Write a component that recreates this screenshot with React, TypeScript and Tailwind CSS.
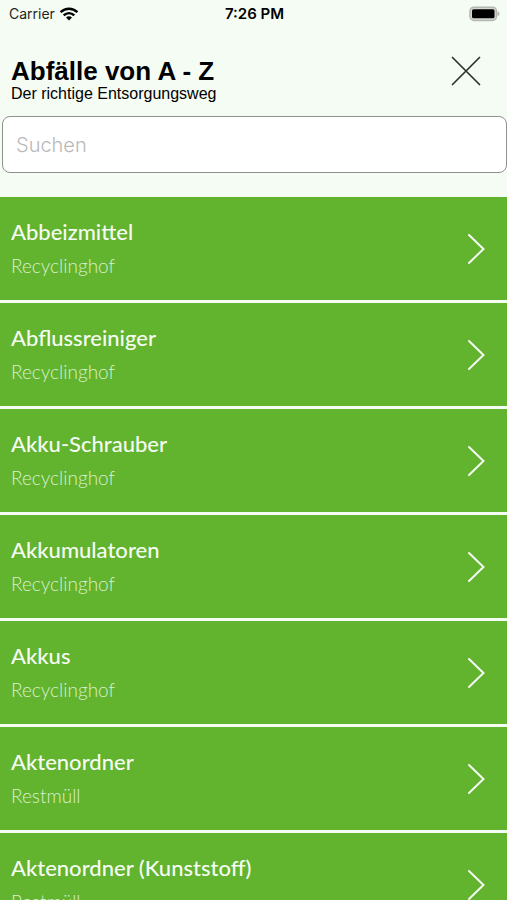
import React, { useState } from "react";

type WasteItem = {
  name: string;
  target: string;
};

const ITEMS: WasteItem[] = [
  { name: "Abbeizmittel", target: "Recyclinghof" },
  { name: "Abflussreiniger", target: "Recyclinghof" },
  { name: "Akku-Schrauber", target: "Recyclinghof" },
  { name: "Akkumulatoren", target: "Recyclinghof" },
  { name: "Akkus", target: "Recyclinghof" },
  { name: "Aktenordner", target: "Restmüll" },
  { name: "Aktenordner (Kunststoff)", target: "Restmüll" },
];

function StatusBar() {
  return (
    <div className="grid grid-cols-3 items-center h-7 pl-[9px] pr-[7px] text-sm text-[#222522] font-['Inter',sans-serif]">
      <div className="flex items-center gap-1">
        <span>Carrier</span>
        <svg width="20" height="14" viewBox="0 0 20 14" fill="none" stroke="black" strokeWidth="2.5" aria-hidden="true">
          <path d="M1.6 5.2C6.4 .5 13.6 .5 18.4 5.2" />
          <path d="M4.7 8.4C7.8 5.5 12.2 5.5 15.3 8.4" />
          <path d="M7 10.5C8.8 8.9 11.2 8.9 13 10.5L10 13.6Z" fill="black" stroke="none" />
        </svg>
      </div>
      <span className="text-center text-[15px] font-semibold text-black">7:26 PM</span>
      <svg className="justify-self-end" width="31" height="16" viewBox="0 0 31 16" aria-hidden="true">
        <rect x="1" y="1.2" width="26.5" height="13.2" rx="4" fill="#d5d9d2" stroke="#b4b8b1" strokeWidth="1.5" />
        <rect x="3" y="3.3" width="22.5" height="9" rx="1.5" fill="black" />
        <path d="M28.5 5.3C31.2 6.2 31.2 9.4 28.5 10.3Z" fill="#b4b8b1" />
      </svg>
    </div>
  );
}

function ItemRow({ item }: { item: WasteItem }) {
  return (
    <li>
      <button
        type="button"
        className="flex w-full h-[103px] items-center justify-between bg-[#62b32e] pl-[11px] pr-[22px] text-left text-[#f5fcf3] font-['Lato',sans-serif]"
      >
        <span className="flex flex-col gap-1">
          <span className="text-[22px] leading-[30px] font-medium">{item.name}</span>
          <span className="text-[19px] leading-[30px] font-light text-[#d9f0cd]">{item.target}</span>
        </span>
        <svg width="18" height="32" viewBox="0 0 18 32" fill="none" stroke="#f5fcf3" strokeWidth="2" strokeLinecap="round" aria-hidden="true">
          <path d="M2 2L16.5 16L2 30" />
        </svg>
      </button>
    </li>
  );
}

export default function App() {
  const [query, setQuery] = useState("");
  const visible = ITEMS.filter(i => i.name.toLowerCase().includes(query.toLowerCase()));

  return (
    <div className="flex h-screen flex-col bg-[#f5fcf4]">
      <StatusBar />

      <header className="flex items-start justify-between pl-[11px] pr-[26px] pt-7 font-['Liberation_Sans',sans-serif] text-black">
        <div>
          <h1 className="text-[26px] leading-[30px] font-bold">Abfälle von A - Z</h1>
          <p className="text-base leading-4">Der richtige Entsorgungsweg</p>
        </div>
        <button type="button" aria-label="Schließen">
          <svg width="30" height="30" viewBox="0 0 30 30" fill="none" stroke="#2f332f" strokeWidth="1.7" strokeLinecap="round">
            <path d="M1.5 1.5L28.5 28.5M28.5 1.5L1.5 28.5" />
          </svg>
        </button>
      </header>

      <div className="pl-[2px] pt-[14px] pb-6">
        <input
          type="text"
          aria-label="Suchen"
          placeholder="Suchen"
          value={query}
          onChange={(e) => setQuery(e.target.value)}
          className="block w-full h-[57px] rounded-lg border border-[#8e928d] bg-white px-[13px] text-xl font-light text-black outline-none placeholder:text-[#b9b9b9] font-['Inter',sans-serif]"
        />
      </div>

      <ul className="flex flex-1 min-h-0 flex-col gap-[3px] overflow-y-auto [scrollbar-width:none]">
        {visible.map(item => (
          <ItemRow key={item.name} item={item} />
        ))}
      </ul>
    </div>
  );
}
